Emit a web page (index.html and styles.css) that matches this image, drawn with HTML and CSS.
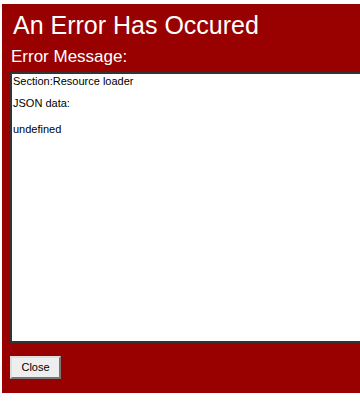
FILE: index.html
```html
<!DOCTYPE html>
<html lang="en">
<head>
    <meta charset="UTF-8">
    <title>Error</title>
    <link rel="stylesheet" href="styles.css">
</head>
<body>

    <div class="error-panel">
        <h1>An Error Has Occured</h1>
        <h2>Error Message:</h2>

        <!-- Message box -->
        <div class="message-box">
            <p>Section:Resource loader</p>
            <p class="json-label">JSON data:</p>
            <p>undefined</p>
        </div>

        <button type="button" class="close-btn">Close</button>
    </div>

</body>
</html>
```

FILE: styles.css
```css
* {
    margin: 0;
    padding: 0;
    box-sizing: border-box;
}

html, body {
    overflow: hidden;
}

body {
    font-family: "Liberation Sans", Arial, sans-serif;
    background-color: #fff;
    padding: 4px 0 0 2px;
}

.error-panel {
    background-color: #990000;
    color: white;
    height: 389px;
    padding: 6px 0 0 8px;
    overflow: hidden;
}

.error-panel h1 {
    font-size: 25px;
    font-weight: normal;
    line-height: 30px;
    padding-left: 3px;
}

.error-panel h2 {
    font-size: 17px;
    font-weight: normal;
    line-height: 20px;
    margin-top: 7px;
    padding-left: 1px;
}

/* Message box */
.message-box {
    width: 400px;
    height: 271px;
    margin-top: 5px;
    background-color: white;
    color: black;
    border: 2px solid #333;
    border-right: none;
    padding: 2px 1px 0;
    font-size: 11px;
    line-height: 11px;
}

.message-box p {
    margin-bottom: 11px;
}

.message-box .json-label {
    margin-bottom: 15px;
}

.close-btn {
    margin-top: 13px;
    width: 51px;
    height: 23px;
    padding-bottom: 2px;
    font-family: "Liberation Sans", Arial, sans-serif;
    font-size: 11px;
    color: black;
    background-color: #eeeeee;
    border: 2px solid;
    border-color: #ddd #777 #777 #ddd;
}
```
